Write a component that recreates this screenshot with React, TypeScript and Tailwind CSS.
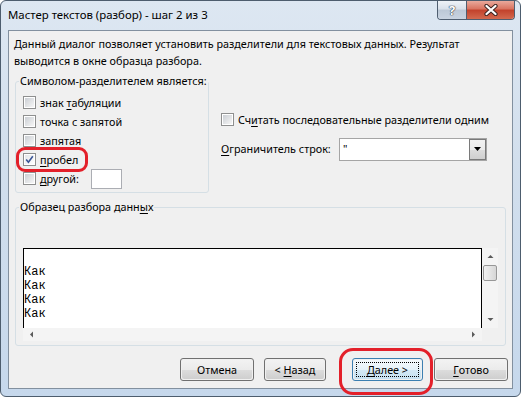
import type { ReactNode } from "react";

// Excel "Text Import Wizard" step 2 of 3, Windows 7 look.
const UI = "font-['Noto_Sans',sans-serif] text-[10.8px] text-black";

function CheckBox({ checked }: { checked?: boolean }) {
  return (
    <span className="flex h-[13px] w-[13px] shrink-0 border border-[#8e8f8f] bg-white p-px">
      <span
        className={`flex h-full w-full items-center justify-center ${
          checked
            ? "bg-gradient-to-br from-[#e4e6e9] to-[#ffffff]"
            : "bg-gradient-to-br from-[#cbcfd4] to-[#f6f6f6]"
        }`}
      >
        {checked && (
          <svg width="9" height="9" viewBox="0 0 9 9">
            <path
              d="M1.2 4.6 L3.4 7.2 L7.8 1.2"
              fill="none"
              stroke="#3a5596"
              strokeWidth="1.6"
            />
          </svg>
        )}
      </span>
    </span>
  );
}

function U({ children }: { children: ReactNode }) {
  return <span className="underline decoration-1 underline-offset-[2px]">{children}</span>;
}

function Group({
  label,
  className,
  children,
}: {
  label: ReactNode;
  className: string;
  children: ReactNode;
}) {
  return (
    <div className={`relative rounded-[3px] border border-[#d5dfe5] ${className}`}>
      <span className="absolute left-[3px] top-[-9px] whitespace-nowrap bg-[#f0f0f0] px-px leading-[16px]">
        {label}
      </span>
      {children}
    </div>
  );
}

function Option({ label, checked }: { label: ReactNode; checked?: boolean }) {
  return (
    <div className="flex h-[19px] items-center gap-[4px] whitespace-nowrap">
      <CheckBox checked={checked} />
      <span className="leading-[16px]">{label}</span>
    </div>
  );
}

function Btn({
  children,
  className,
  primary,
}: {
  children: ReactNode;
  className: string;
  primary?: boolean;
}) {
  return (
    <button
      type="button"
      className={`relative h-[23px] rounded-[3px] border p-px ${
        primary ? "border-[#3c7fb1]" : "border-[#707070]"
      } ${className}`}
    >
      <span
        className={`flex h-full w-full items-center justify-center whitespace-pre rounded-[2px] leading-[16px] ${
          primary
            ? "bg-[linear-gradient(180deg,#f4f9fc_0%,#e6f2f9_50%,#d5e9f5_51%,#c6e1f1_100%)]"
            : "bg-[linear-gradient(180deg,#f2f2f2_0%,#ebebeb_50%,#dddddd_51%,#cfcfcf_100%)]"
        }`}
      >
        {children}
      </span>
      {primary && (
        <span className="absolute inset-[3px] border border-dotted border-black" />
      )}
    </button>
  );
}

function Arrow({ dir }: { dir: "up" | "down" | "left" | "right" }) {
  const d = {
    up: "M0.5 4 L3.5 1 L6.5 4 Z",
    down: "M0.5 1 L3.5 4 L6.5 1 Z",
    left: "M4 0.5 L1 3.5 L4 6.5 Z",
    right: "M1 0.5 L4 3.5 L1 6.5 Z",
  }[dir];
  const vertical = dir === "up" || dir === "down";
  return (
    <svg width={vertical ? 7 : 5} height={vertical ? 5 : 7} viewBox={vertical ? "0 0 7 5" : "0 0 5 7"}>
      <path d={d} fill="#5a5a5a" />
    </svg>
  );
}

export default function App() {
  return (
    <div className={`relative h-[397px] w-[521px] bg-white ${UI}`}>
      <div className="flex h-full w-full flex-col rounded-[6px] border border-[#4d5d6e] bg-[linear-gradient(180deg,#dde7f2_0%,#d2dfed_40%,#c6d8ec_100%)]">
        {/* title bar */}
        <div className="flex h-[29px] shrink-0 items-start">
          <span className="pl-[7px] pt-[6px] text-[11.4px] leading-[16px]">
            Мастер текстов (разбор) - шаг 2 из 3
          </span>
          <div className="ml-auto mr-[5px] flex h-[19px] overflow-hidden rounded-b-[4px] border border-t-0 border-[#4f5e70]">
            <div className="flex w-[29px] items-center justify-center border-r border-[#4f5e70] bg-[linear-gradient(180deg,#eef2f7_0%,#d8e0ea_45%,#bcc8d6_50%,#c9d4e1_100%)]">
              <span className="text-[13px] font-bold leading-none text-white [text-shadow:0_0_1px_#2f3b49,0_0_1px_#2f3b49,0_0_1px_#2f3b49]">
                ?
              </span>
            </div>
            <div className="flex w-[47px] items-center justify-center bg-[linear-gradient(180deg,#e9a99c_0%,#d8725f_45%,#c2412b_50%,#d36a4f_100%)]">
              <svg width="16" height="12" viewBox="0 0 16 12">
                <path d="M3.5 2 L12.5 10 M12.5 2 L3.5 10" stroke="#3a2320" strokeWidth="4.2" strokeLinecap="round" />
                <path d="M3.5 2 L12.5 10 M12.5 2 L3.5 10" stroke="#ffffff" strokeWidth="2.3" strokeLinecap="round" />
              </svg>
            </div>
          </div>
        </div>

        {/* client area */}
        <div className="mx-[7px] h-[359px] shrink-0 border border-[#82909f] bg-[#f0f0f0]">
          <p className="mt-[4px] pl-[5px] leading-[17px]">
            Данный диалог позволяет установить разделители для текстовых данных. Результат
            <br />
            выводится в окне образца разбора.
          </p>

          <div className="mt-[12px] flex">
            <Group label="Символом-разделителем является:" className="ml-[6px] h-[112px] w-[194px] pl-[7px] pt-[11px]">
              <Option label={<>знак <U>т</U>абуляции</>} />
              <Option label="точка с запятой" />
              <Option label={<><U>з</U>апятая</>} />
              <Option label={<><U>п</U>робел</>} checked />
              <div className="flex h-[19px] items-center gap-[4px]">
                <CheckBox />
                <span className="w-[47px] leading-[16px]">
                  <U>д</U>ругой:
                </span>
                <span className="h-[20px] w-[31px] border border-[#abadb3] bg-white" />
              </div>
            </Group>

            <div className="ml-[12px] pt-[29px]">
              <Option label={<>Сч<U>и</U>тать последовательные разделители одним</>} />
              <div className="mt-[9px] flex h-[22px] items-center">
                <span className="w-[118px] leading-[16px]">
                  <U>О</U>граничитель строк:
                </span>
                <div className="flex h-[23px] w-[148px] border border-[#a5a5a5] bg-white">
                  <span className="flex-1 pl-[3px] leading-[20px]">"</span>
                  <span className="flex w-[17px] items-center justify-center border border-[#7a7a7a] bg-[linear-gradient(180deg,#f2f2f2_0%,#ebebeb_50%,#dddddd_51%,#cfcfcf_100%)]">
                    <svg width="7" height="4" viewBox="0 0 7 4">
                      <path d="M0 0 L7 0 L3.5 4 Z" fill="#000" />
                    </svg>
                  </span>
                </div>
              </div>
            </div>
          </div>

          <Group
            label={<>Образец разбора данн<U>ы</U>х</>}
            className="ml-[6px] mt-[14px] h-[139px] w-[491px] pl-[7px] pt-[40px]"
          >
            <div className="flex h-[93px] w-[475px] flex-col">
              <div className="flex h-[80px]">
                <div className="w-[459px] border border-b-0 border-black bg-white pt-[2px] font-['Liberation_Mono',monospace] text-[12px] leading-[14px]">
                  <div className="h-[14px]" />
                  <div>Как</div>
                  <div>Как</div>
                  <div>Как</div>
                  <div>Как</div>
                </div>
                <div className="flex w-[16px] flex-col items-center bg-[#f4f4f4]">
                  <div className="flex h-[17px] items-center">
                    <Arrow dir="up" />
                  </div>
                  <div className="h-[16px] w-[14px] rounded-[2px] border border-[#979797] bg-[linear-gradient(90deg,#f0f0f0_0%,#e4e4e4_50%,#d6d6d6_100%)]" />
                  <div className="flex-1" />
                  <div className="flex h-[17px] items-center">
                    <Arrow dir="down" />
                  </div>
                </div>
              </div>
              <div className="flex h-[13px]">
                <div className="flex w-[459px] items-center justify-between bg-[#f4f4f4] px-[6px]">
                  <Arrow dir="left" />
                  <Arrow dir="right" />
                </div>
                <div className="w-[16px] bg-[#f0f0f0]" />
              </div>
            </div>
          </Group>

          <div className="mt-[12px] flex pl-[171px]">
            <Btn className="w-[74px]">Отмена</Btn>
            <Btn className="ml-[10px] w-[62px]">
              {"< "}
              <U>Н</U>азад
            </Btn>
            <Btn className="ml-[26px] w-[71px]" primary>
              <U>Д</U>
              {"алее >"}
            </Btn>
            <Btn className="ml-[11px] w-[74px]">
              <U>Г</U>отово
            </Btn>
          </div>
        </div>
      </div>

      {/* red highlight marks drawn over the screenshot */}
      <span className="absolute left-[16px] top-[147px] h-[25px] w-[72px] rounded-[9px] border-[3px] border-[#e3202a]" />
      <span className="absolute left-[339px] top-[348px] h-[47px] w-[94px] rounded-[14px] border-[3px] border-[#e3202a]" />
    </div>
  );
}
